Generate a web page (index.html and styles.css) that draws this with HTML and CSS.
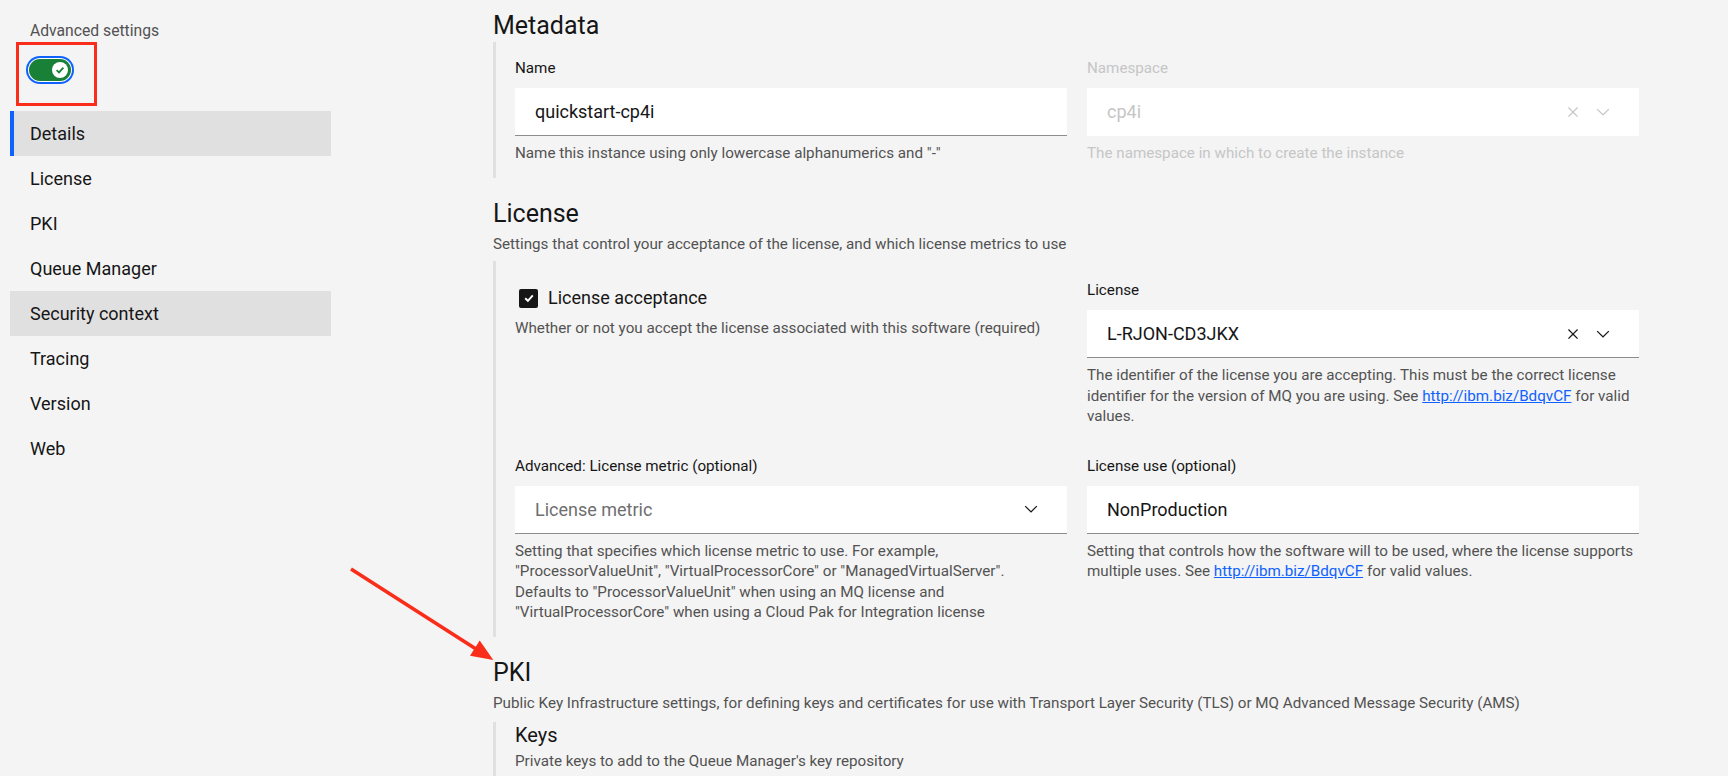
FILE: index.html
```html
<!DOCTYPE html>
<html lang="en">
<head>
<meta charset="utf-8">
<title>Create queue manager</title>
<link rel="stylesheet" href="styles.css">
</head>
<body>
<div class="page">
  <aside class="sidebar">
    <div class="adv-label">Advanced settings</div>
    <div class="toggle-wrap">
      <div class="toggle" role="switch" aria-checked="true">
        <span class="knob">
          <svg class="knob-check" viewBox="0 0 10 10" width="10" height="10"><path d="M1.6 5.2 L4 7.4 L8.4 2.6" fill="none" stroke="#198038" stroke-width="1.8"/></svg>
        </span>
      </div>
      <span class="annot-box"></span>
    </div>
    <nav class="nav">
      <a class="nav-item is-active">Details</a>
      <a class="nav-item">License</a>
      <a class="nav-item">PKI</a>
      <a class="nav-item">Queue Manager</a>
      <a class="nav-item is-hover">Security context</a>
      <a class="nav-item">Tracing</a>
      <a class="nav-item">Version</a>
      <a class="nav-item">Web</a>
    </nav>
  </aside>

  <main class="content">
    <section class="section">
      <h2 class="section-title">Metadata</h2>
      <div class="group">
        <div class="grid">
          <div class="field">
            <label class="field-label">Name</label>
            <div class="input"><span class="input-value">quickstart-cp4i</span></div>
            <p class="helper">Name this instance using only lowercase alphanumerics and "-"</p>
          </div>
          <div class="field is-disabled">
            <label class="field-label">Namespace</label>
            <div class="input">
              <span class="input-value">cp4i</span>
              <span class="input-icons">
                <svg class="icon" viewBox="0 0 16 16"><path d="M12 4.7L11.3 4 8 7.3 4.7 4 4 4.7 7.3 8 4 11.3 4.7 12 8 8.7 11.3 12 12 11.3 8.7 8z"/></svg>
                <svg class="icon" viewBox="0 0 16 16"><path d="M8 11L3 6 3.7 5.3 8 9.6 12.3 5.3 13 6z"/></svg>
              </span>
            </div>
            <p class="helper">The namespace in which to create the instance</p>
          </div>
        </div>
      </div>
    </section>

    <section class="section">
      <h2 class="section-title">License</h2>
      <p class="section-desc">Settings that control your acceptance of the license, and which license metrics to use</p>
      <div class="group group--license">
        <div class="grid">
          <div class="field">
            <div class="checkbox">
              <span class="checkbox-box">
                <svg viewBox="0 0 12 12" width="12" height="12"><path d="M2.2 6.2 L4.9 8.8 L9.8 3.4" fill="none" stroke="#fff" stroke-width="1.9"/></svg>
              </span>
              <span class="checkbox-label">License acceptance</span>
            </div>
            <p class="helper helper--check">Whether or not you accept the license associated with this software (required)</p>
          </div>
          <div class="field">
            <label class="field-label">License</label>
            <div class="input">
              <span class="input-value">L-RJON-CD3JKX</span>
              <span class="input-icons">
                <svg class="icon" viewBox="0 0 16 16"><path d="M12 4.7L11.3 4 8 7.3 4.7 4 4 4.7 7.3 8 4 11.3 4.7 12 8 8.7 11.3 12 12 11.3 8.7 8z"/></svg>
                <svg class="icon" viewBox="0 0 16 16"><path d="M8 11L3 6 3.7 5.3 8 9.6 12.3 5.3 13 6z"/></svg>
              </span>
            </div>
            <p class="helper">The identifier of the license you are accepting. This must be the correct license<br>identifier for the version of MQ you are using. See <a class="link">http://ibm.biz/BdqvCF</a> for valid<br>values.</p>
          </div>
          <div class="field">
            <label class="field-label">Advanced: License metric (optional)</label>
            <div class="input">
              <span class="input-value is-placeholder">License metric</span>
              <span class="input-icons">
                <svg class="icon" viewBox="0 0 16 16"><path d="M8 11L3 6 3.7 5.3 8 9.6 12.3 5.3 13 6z"/></svg>
              </span>
            </div>
            <p class="helper">Setting that specifies which license metric to use. For example,<br>"ProcessorValueUnit", "VirtualProcessorCore" or "ManagedVirtualServer".<br>Defaults to "ProcessorValueUnit" when using an MQ license and<br>"VirtualProcessorCore" when using a Cloud Pak for Integration license</p>
          </div>
          <div class="field">
            <label class="field-label">License use (optional)</label>
            <div class="input"><span class="input-value">NonProduction</span></div>
            <p class="helper">Setting that controls how the software will to be used, where the license supports<br>multiple uses. See <a class="link">http://ibm.biz/BdqvCF</a> for valid values.</p>
          </div>
        </div>
      </div>
    </section>

    <section class="section">
      <h2 class="section-title">PKI</h2>
      <p class="section-desc">Public Key Infrastructure settings, for defining keys and certificates for use with Transport Layer Security (TLS) or MQ Advanced Message Security (AMS)</p>
      <div class="group group--sub">
        <h3 class="sub-title">Keys</h3>
        <p class="section-desc">Private keys to add to the Queue Manager's key repository</p>
      </div>
    </section>
  </main>

  <svg class="annot-arrow" viewBox="0 0 160 110" width="160" height="110">
    <line x1="11" y1="9" x2="136" y2="89" stroke="#fa2d1a" stroke-width="3.5"/>
    <polygon points="153.3,100 130,95.7 139.7,80.5" fill="#fa2d1a"/>
  </svg>
</div>
</body>
</html>
```
FILE: styles.css
```css
* { box-sizing: border-box; }

body {
  margin: 0;
  background: #f4f4f4;
  font-family: Roboto, "Liberation Sans", sans-serif;
  color: #161616;
}

.page {
  position: relative;
  display: flex;
  height: 776px;
  overflow: hidden;
}

/* Sidebar */
.sidebar {
  flex: 0 0 331px;
  padding: 21px 0 0 10px;
}

.adv-label {
  padding-left: 20px;
  font-size: 15.7px;
  line-height: 20px;
  color: #525252;
}

.toggle-wrap {
  position: relative;
  margin: 18px 0 0 19px;
  width: 42px;
  height: 22px;
}

.toggle {
  position: relative;
  width: 42px;
  height: 22px;
  border-radius: 11px;
  background: #198038;
  box-shadow: 0 0 0 1px #fff, 0 0 0 3px #0f62fe;
}

.knob {
  position: absolute;
  right: 3px;
  top: 3px;
  width: 16px;
  height: 16px;
  border-radius: 50%;
  background: #fff;
  display: flex;
  align-items: center;
  justify-content: center;
}

.annot-box {
  position: absolute;
  left: -13px;
  top: -17px;
  width: 81px;
  height: 64px;
  border: 3px solid #fa2d1a;
}

.nav {
  margin-top: 30px;
  display: flex;
  flex-direction: column;
}

.nav-item {
  height: 45px;
  display: flex;
  align-items: center;
  padding-left: 16px;
  border-left: 4px solid transparent;
  font-size: 18px;
  color: #161616;
}

.nav-item.is-active {
  background: #e0e0e0;
  border-left-color: #0f62fe;
}

.nav-item.is-hover {
  background: #e0e0e0;
}

/* Main content */
.content {
  flex: 0 0 1146px;
  margin-left: 162px;
  padding-top: 10px;
}

.section + .section {
  margin-top: 20px;
}

.section-title {
  margin: 0;
  font-size: 25px;
  line-height: 32px;
  font-weight: 400;
}

.section-desc {
  margin: 4px 0 0;
  font-size: 15.2px;
  line-height: 20.5px;
  color: #525252;
}

.group {
  border-left: 3px solid #e0e0e0;
  padding: 17px 0 14px 19px;
}

.section-desc + .group {
  margin-top: 7px;
}

.group--license {
  padding-top: 20px;
  padding-bottom: 14px;
}

.section-desc + .group--sub {
  margin-top: 9px;
}

.group--sub {
  padding-top: 1px;
}

.sub-title {
  margin: 0;
  font-size: 20px;
  line-height: 24px;
  font-weight: 400;
}

.grid {
  display: grid;
  grid-template-columns: 1fr 1fr;
  column-gap: 20px;
  row-gap: 30px;
}

.field-label {
  display: block;
  font-size: 15.2px;
  line-height: 18px;
  margin-bottom: 11px;
}

.input {
  height: 48px;
  background: #fff;
  border-bottom: 1px solid #8d8d8d;
  display: flex;
  align-items: center;
  padding: 0 26px 0 20px;
  font-size: 18px;
}

.input-value.is-placeholder {
  color: #6f6f6f;
}

.input-icons {
  margin-left: auto;
  display: flex;
  align-items: center;
  gap: 10px;
}

.icon {
  width: 20px;
  height: 20px;
  fill: #161616;
}

.helper {
  margin: 7px 0 0;
  font-size: 15.2px;
  line-height: 20.5px;
  color: #525252;
}

.helper--check {
  margin-top: 8px;
}

.link {
  color: #0f62fe;
  text-decoration: underline;
}

.field.is-disabled .field-label,
.field.is-disabled .input-value,
.field.is-disabled .helper {
  color: #c6c6c6;
}

.field.is-disabled .input {
  border-bottom-color: transparent;
}

.field.is-disabled .icon {
  fill: #c6c6c6;
}

/* Checkbox */
.checkbox {
  display: flex;
  align-items: center;
  gap: 10px;
  padding: 5px 0 0 4px;
  font-size: 18px;
  line-height: 24px;
}

.checkbox-box {
  width: 19px;
  height: 19px;
  background: #161616;
  border-radius: 2px;
  display: flex;
  align-items: center;
  justify-content: center;
}

/* Annotation arrow overlay */
.annot-arrow {
  position: absolute;
  left: 340px;
  top: 560px;
}
```
